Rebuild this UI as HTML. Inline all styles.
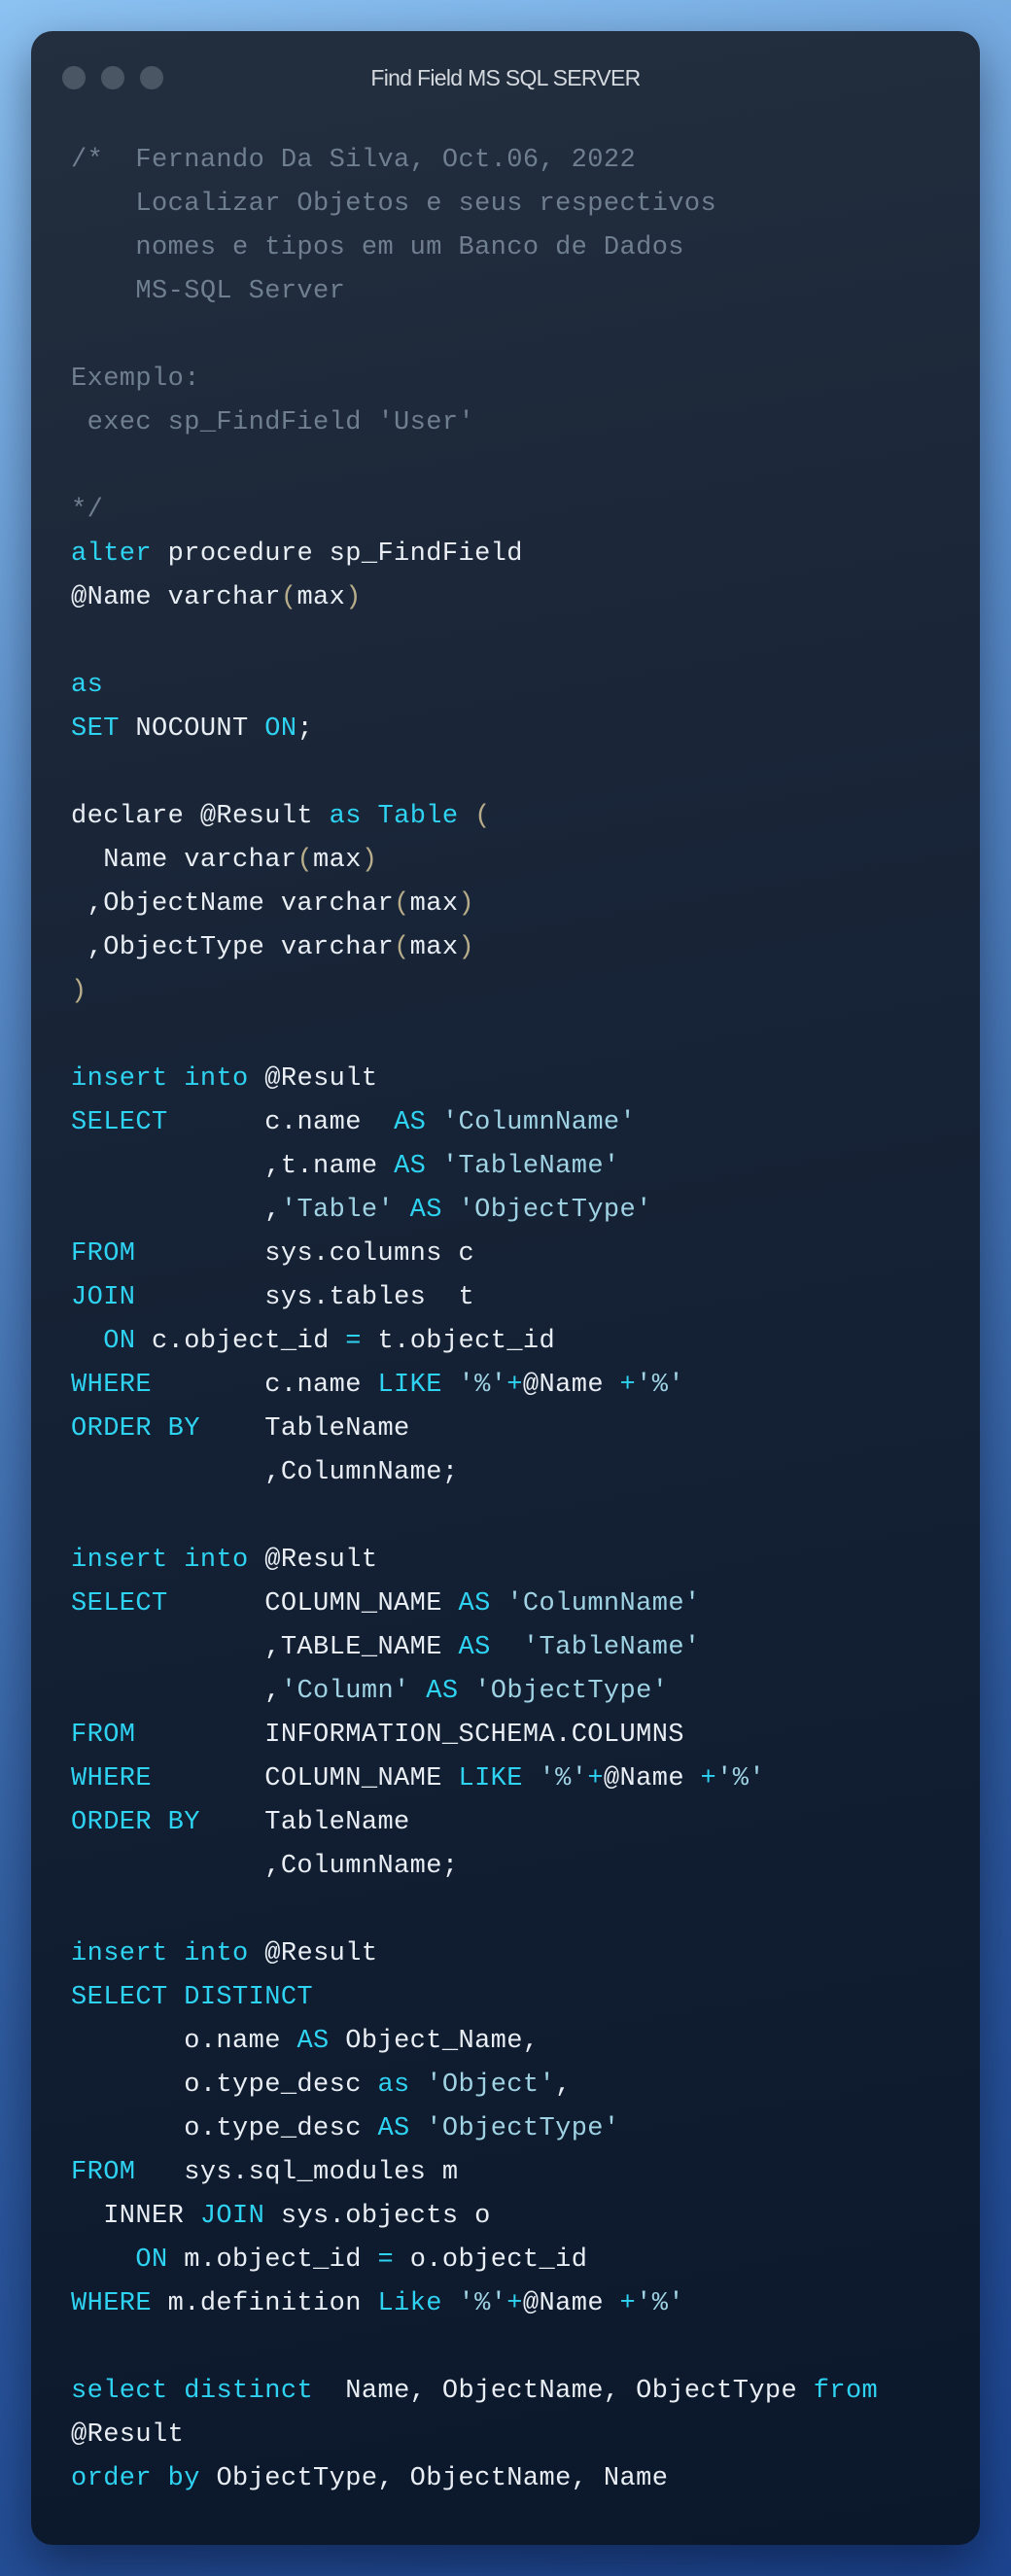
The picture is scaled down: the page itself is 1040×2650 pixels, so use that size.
<!DOCTYPE html>
<html><head><meta charset="utf-8"><style>
html,body{margin:0;padding:0}
body{width:1040px;height:2650px;background:linear-gradient(160deg,#8cc2f2 0%,#5b8fcc 30%,#2d5a9e 70%,#1c4590 100%);position:relative;overflow:hidden}
.card{position:absolute;left:32px;top:32px;width:976px;height:2586px;border-radius:22px;background:linear-gradient(170deg,#232f3e 0%,#172336 40%,#0b172b 100%);box-shadow:0 20px 50px rgba(0,0,20,.45)}
.dot{position:absolute;top:36px;width:24px;height:24px;border-radius:50%;background:#4b5665}
.title{position:absolute;left:0;right:0;top:35px;text-align:center;font:23px "Liberation Sans",sans-serif;color:#d4d9df;letter-spacing:-0.7px;line-height:26px}
pre{position:absolute;left:41px;top:111px;margin:0;font-family:"Liberation Mono",monospace;font-size:27px;letter-spacing:0.4px;line-height:45px;color:#e8eef4}
.c{color:#6f7f90}.k{color:#2fd3f2}.s{color:#9fd3e3}.p{color:#b8ad8a}
</style></head><body>
<div class="card">
<div class="dot" style="left:32px"></div><div class="dot" style="left:72px"></div><div class="dot" style="left:112px"></div>
<div class="title">Find Field MS SQL SERVER</div>
<pre><span class="c">/*  Fernando Da Silva, Oct.06, 2022
    Localizar Objetos e seus respectivos
    nomes e tipos em um Banco de Dados
    MS-SQL Server

Exemplo:
 exec sp_FindField 'User'

*/</span>
<span class="k">alter</span> procedure sp_FindField
@Name varchar<span class="p">(</span>max<span class="p">)</span>

<span class="k">as</span>
<span class="k">SET</span> NOCOUNT <span class="k">ON</span>;

declare @Result <span class="k">as</span> <span class="k">Table</span> <span class="p">(</span>
  Name varchar<span class="p">(</span>max<span class="p">)</span>
 ,ObjectName varchar<span class="p">(</span>max<span class="p">)</span>
 ,ObjectType varchar<span class="p">(</span>max<span class="p">)</span>
<span class="p">)</span>

<span class="k">insert</span> <span class="k">into</span> @Result
<span class="k">SELECT</span>      c.name  <span class="k">AS</span> <span class="s">'ColumnName'</span>
            ,t.name <span class="k">AS</span> <span class="s">'TableName'</span>
            ,<span class="s">'Table'</span> <span class="k">AS</span> <span class="s">'ObjectType'</span>
<span class="k">FROM</span>        sys.columns c
<span class="k">JOIN</span>        sys.tables  t
  <span class="k">ON</span> c.object_id <span class="k">=</span> t.object_id
<span class="k">WHERE</span>       c.name <span class="k">LIKE</span> <span class="s">'%'</span><span class="k">+</span>@Name <span class="k">+</span><span class="s">'%'</span>
<span class="k">ORDER BY</span>    TableName
            ,ColumnName;

<span class="k">insert</span> <span class="k">into</span> @Result
<span class="k">SELECT</span>      COLUMN_NAME <span class="k">AS</span> <span class="s">'ColumnName'</span>
            ,TABLE_NAME <span class="k">AS</span>  <span class="s">'TableName'</span>
            ,<span class="s">'Column'</span> <span class="k">AS</span> <span class="s">'ObjectType'</span>
<span class="k">FROM</span>        INFORMATION_SCHEMA.COLUMNS
<span class="k">WHERE</span>       COLUMN_NAME <span class="k">LIKE</span> <span class="s">'%'</span><span class="k">+</span>@Name <span class="k">+</span><span class="s">'%'</span>
<span class="k">ORDER BY</span>    TableName
            ,ColumnName;

<span class="k">insert</span> <span class="k">into</span> @Result
<span class="k">SELECT DISTINCT</span>
       o.name <span class="k">AS</span> Object_Name,
       o.type_desc <span class="k">as</span> <span class="s">'Object'</span>,
       o.type_desc <span class="k">AS</span> <span class="s">'ObjectType'</span>
<span class="k">FROM</span>   sys.sql_modules m
  INNER <span class="k">JOIN</span> sys.objects o
    <span class="k">ON</span> m.object_id <span class="k">=</span> o.object_id
<span class="k">WHERE</span> m.definition <span class="k">Like</span> <span class="s">'%'</span><span class="k">+</span>@Name <span class="k">+</span><span class="s">'%'</span>

<span class="k">select</span> <span class="k">distinct</span>  Name, ObjectName, ObjectType <span class="k">from</span>
@Result
<span class="k">order</span> <span class="k">by</span> ObjectType, ObjectName, Name</pre>
</div>
</body></html>
